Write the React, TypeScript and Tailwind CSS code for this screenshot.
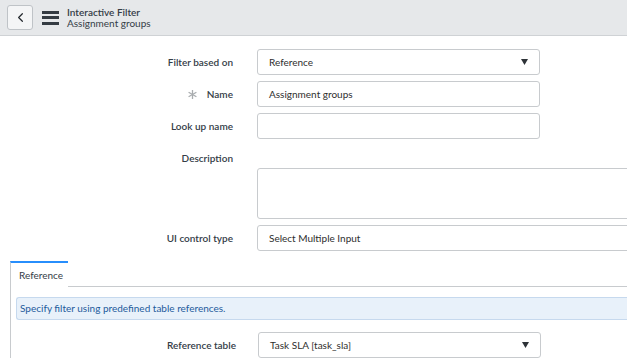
import { ChevronLeft } from 'lucide-react'

const Caret = () => (
  <svg width="7" height="6" viewBox="0 0 7 6" className="shrink-0">
    <path d="M0 0 H7 L3.5 6 Z" fill="#2e3338" />
  </svg>
)

// grey "required" mark drawn as a six-spoke star
const Star = () => (
  <svg width="9" height="9" viewBox="0 0 9 9" className="mr-[10px]">
    <g stroke="#a9acaf" strokeWidth="1.3">
      <line x1="4.5" y1="0" x2="4.5" y2="9" />
      <line x1="0.6" y1="2.25" x2="8.4" y2="6.75" />
      <line x1="0.6" y1="6.75" x2="8.4" y2="2.25" />
    </g>
  </svg>
)

const Label = ({ children, required }: { children: React.ReactNode; required?: boolean }) => (
  <div className="flex h-[26px] items-center justify-end text-[10px] font-semibold text-[#343d47]">
    {required && <Star />}
    {children}
  </div>
)

const Field = ({ value, select, wide }: { value?: string; select?: boolean; wide?: boolean }) => (
  <div
    className={`flex h-[26px] items-center justify-between rounded-[3px] border border-[#c8cbce] bg-white pr-[11px] pl-[11px] text-[10px] text-[#2e2e2e] ${
      wide ? 'w-[420px]' : 'w-[283px]'
    }`}
  >
    <span>{value}</span>
    {select && <Caret />}
  </div>
)

export default function App() {
  return (
    <div className="h-[364px] w-[627px] overflow-hidden bg-white font-['Lato',sans-serif]">
      <header className="flex h-[36px] items-center border-b border-[#cfd2d5] bg-[#e6e8ea]">
        <button className="ml-[7px] flex h-[25px] w-[26px] items-center justify-center rounded-[3px] border border-[#bfc3c7] bg-[#f4f5f6]">
          <ChevronLeft size={15} strokeWidth={1.9} color="#23282d" />
        </button>
        <div className="ml-[9px] flex w-[17px] flex-col gap-[2.5px]">
          <span className="h-[3px] bg-[#343b42]" />
          <span className="h-[3px] bg-[#343b42]" />
          <span className="h-[3px] bg-[#343b42]" />
        </div>
        <div className="ml-[8px] flex flex-col text-[10px] leading-[11px] font-semibold text-[#343d47]">
          <span>Interactive Filter</span>
          <span className="font-normal">Assignment groups</span>
        </div>
      </header>

      <div className="grid grid-cols-[233px_auto] gap-x-[24px] gap-y-[6px] pt-[13px]">
        <Label>Filter based on</Label>
        <Field value="Reference" select />

        <Label required>Name</Label>
        <Field value="Assignment groups" />

        <Label>Look up name</Label>
        <Field />

        <div className="flex h-[23px] items-start justify-end pt-[6px] text-[10px] font-semibold text-[#343d47]">
          Description
        </div>
        <div />

        <div />
        <div className="-mt-[6px] h-[51px] w-[420px] rounded-[3px] border border-[#c8cbce] bg-white" />

        <Label>UI control type</Label>
        <Field value="Select Multiple Input" wide />
      </div>

      <div className="mt-[10px] ml-[10px]">
        <div className="flex">
          <div className="flex h-[26px] w-[58px] items-center border-t-2 border-l border-t-[#278efc] border-l-[#c8cbce] pl-[8px] text-[10px] text-[#343d47]">
            Reference
          </div>
          <div className="flex-1 border-b border-[#c8cbce]" />
        </div>
        <div className="border-l border-[#c8cbce] pt-[10px] pl-[5px]">
          <div className="flex h-[23px] items-center rounded-l-[3px] border border-r-0 border-[#c6d9ee] bg-[#e8f1fa] pl-[3px] text-[10px] text-[#1e5b9c]">
            Specify filter using predefined table references.
          </div>
          <div className="mt-[12px] grid grid-cols-[220px_auto] gap-x-[22px]">
            <Label>Reference table</Label>
            <Field value="Task SLA [task_sla]" select />
          </div>
        </div>
      </div>
    </div>
  )
}
